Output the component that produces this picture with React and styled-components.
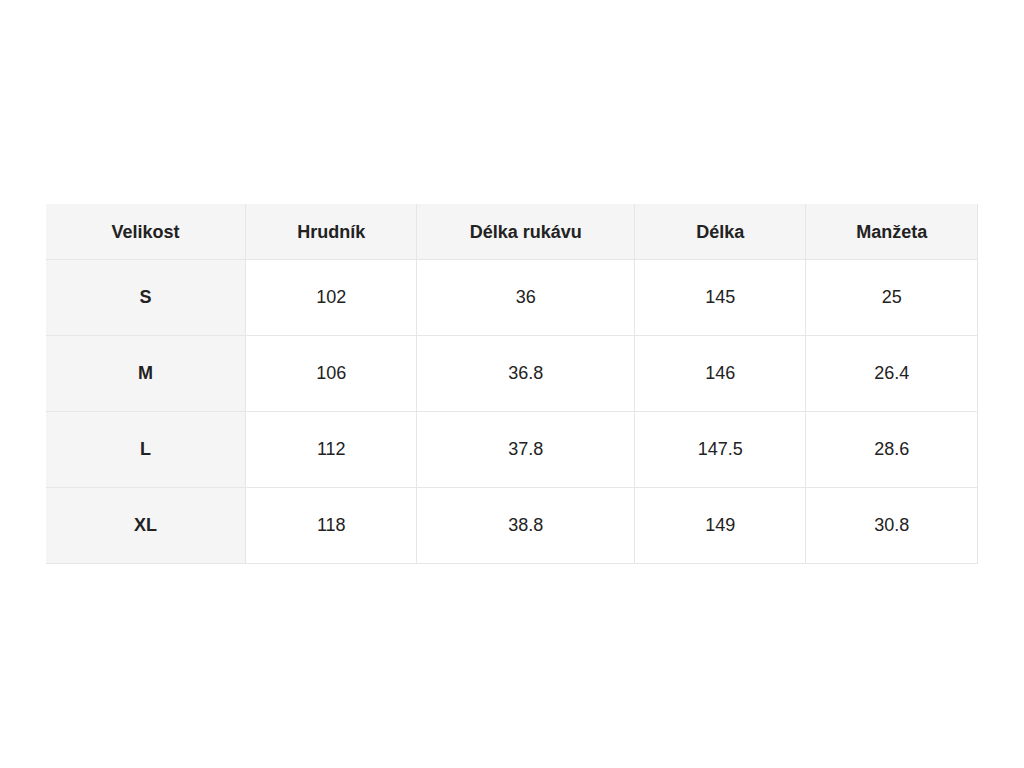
import React from 'react';
import styled, { createGlobalStyle } from 'styled-components';

const GlobalStyle = createGlobalStyle`
  html, body {
    margin: 0;
    padding: 0;
    background: #fff;
    font-family: "Liberation Sans", Arial, sans-serif;
  }
`;

const columns = [
  { title: 'Velikost', width: 200 },
  { title: 'Hrudník', width: 171 },
  { title: 'Délka rukávu', width: 218 },
  { title: 'Délka', width: 171 },
  { title: 'Manžeta', width: 172 },
];

const rows = [
  ['S', '102', '36', '145', '25'],
  ['M', '106', '36.8', '146', '26.4'],
  ['L', '112', '37.8', '147.5', '28.6'],
  ['XL', '118', '38.8', '149', '30.8'],
];

const App = () => (
  <Page>
    <GlobalStyle />
    <SizeTable>
      <colgroup>
        {columns.map((c) => (
          <col key={c.title} style={{ width: c.width }} />
        ))}
      </colgroup>
      <thead>
        <tr>
          {columns.map((c) => (
            <Th key={c.title}>{c.title}</Th>
          ))}
        </tr>
      </thead>
      <tbody>
        {rows.map((r) => (
          <tr key={r[0]}>
            {r.map((v, i) => (
              <Td key={i} $first={i === 0}>{v}</Td>
            ))}
          </tr>
        ))}
      </tbody>
    </SizeTable>
  </Page>
);

export default App;

const Page = styled.div`
  min-height: 768px;
  display: flex;
  align-items: center;
  justify-content: center;
`;

const SizeTable = styled.table`
  width: 932px;
  border-collapse: collapse;
  table-layout: fixed;
  color: #222;
  font-size: 18px;
`;

const Th = styled.th`
  height: 55px;
  padding: 1px 10px 0;
  box-sizing: border-box;
  background: #f5f5f5;
  font-weight: bold;
  text-align: center;
  border-bottom: 1px solid #e6e6e6;
  border-right: 1px solid #e6e6e6;
`;

const Td = styled.td`
  height: 76px;
  padding: 1px 10px 0;
  box-sizing: border-box;
  text-align: center;
  background: ${({ $first }) => ($first ? '#f5f5f5' : '#fff')};
  font-weight: ${({ $first }) => ($first ? 'bold' : 'normal')};
  border-bottom: 1px solid #e6e6e6;
  border-right: 1px solid #e6e6e6;
`;
